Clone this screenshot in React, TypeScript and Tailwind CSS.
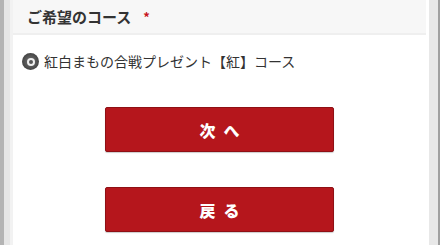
import React from 'react';

export default function App() {
  return (
    <div
      className="flex h-[245px] w-[440px] overflow-hidden bg-white"
      style={{ fontFamily: '"Noto Sans CJK JP", "Noto Sans", sans-serif' }}
    >
      <div className="w-[4px] bg-[#b4b4b4]" />
      <div className="w-[6px] bg-[#e6e6e6]" />
      <div className="w-[3px] bg-[#f2f2f2]" />

      <div className="flex flex-1 flex-col">
        <div className="flex h-[35px] items-center border-b-2 border-[#efefef] bg-[#f7f7f7] pl-[14px] pt-[1px]">
          <span className="text-[15px] font-bold text-[#333]">ご希望のコース</span>
          <span className="ml-[12px] text-[13px] font-bold text-[#c8161d]">*</span>
        </div>

        <div className="flex items-center pl-[9px] pt-[16px]">
          <span className="flex h-[17px] w-[17px] items-center justify-center rounded-full bg-[radial-gradient(circle,#777_0%,#444_70%,#333_100%)]">
            <span className="flex h-[8px] w-[8px] items-center justify-center rounded-full bg-[#eee]">
              <span className="h-[4px] w-[4px] rounded-full bg-[#555]" />
            </span>
          </span>
          <span className="ml-[5px] text-[14px] text-[#333]">紅白まもの合戦プレゼント【紅】コース</span>
        </div>

        <div className="flex flex-col items-center pt-[35px]">
          <button className="flex h-[45px] w-[229px] items-center justify-center rounded-[2px] border border-[#8f1015] bg-[#b5161c] text-[16px] font-black tracking-[0.5em] text-white shadow-[0_1px_1px_rgba(0,0,0,0.2)]">
            <span className="pl-[0.5em]">次へ</span>
          </button>
          <button className="mt-[35px] flex h-[45px] w-[229px] items-center justify-center rounded-[2px] border border-[#8f1015] bg-[#b5161c] text-[16px] font-black tracking-[0.5em] text-white shadow-[0_1px_1px_rgba(0,0,0,0.2)]">
            <span className="pl-[0.5em]">戻る</span>
          </button>
        </div>
      </div>

      <div className="w-[3px] bg-white" />
      <div className="w-[9px] bg-[#e8e8e8]" />
      <div className="w-[2px] bg-[#a0a0a0]" />
    </div>
  );
}
